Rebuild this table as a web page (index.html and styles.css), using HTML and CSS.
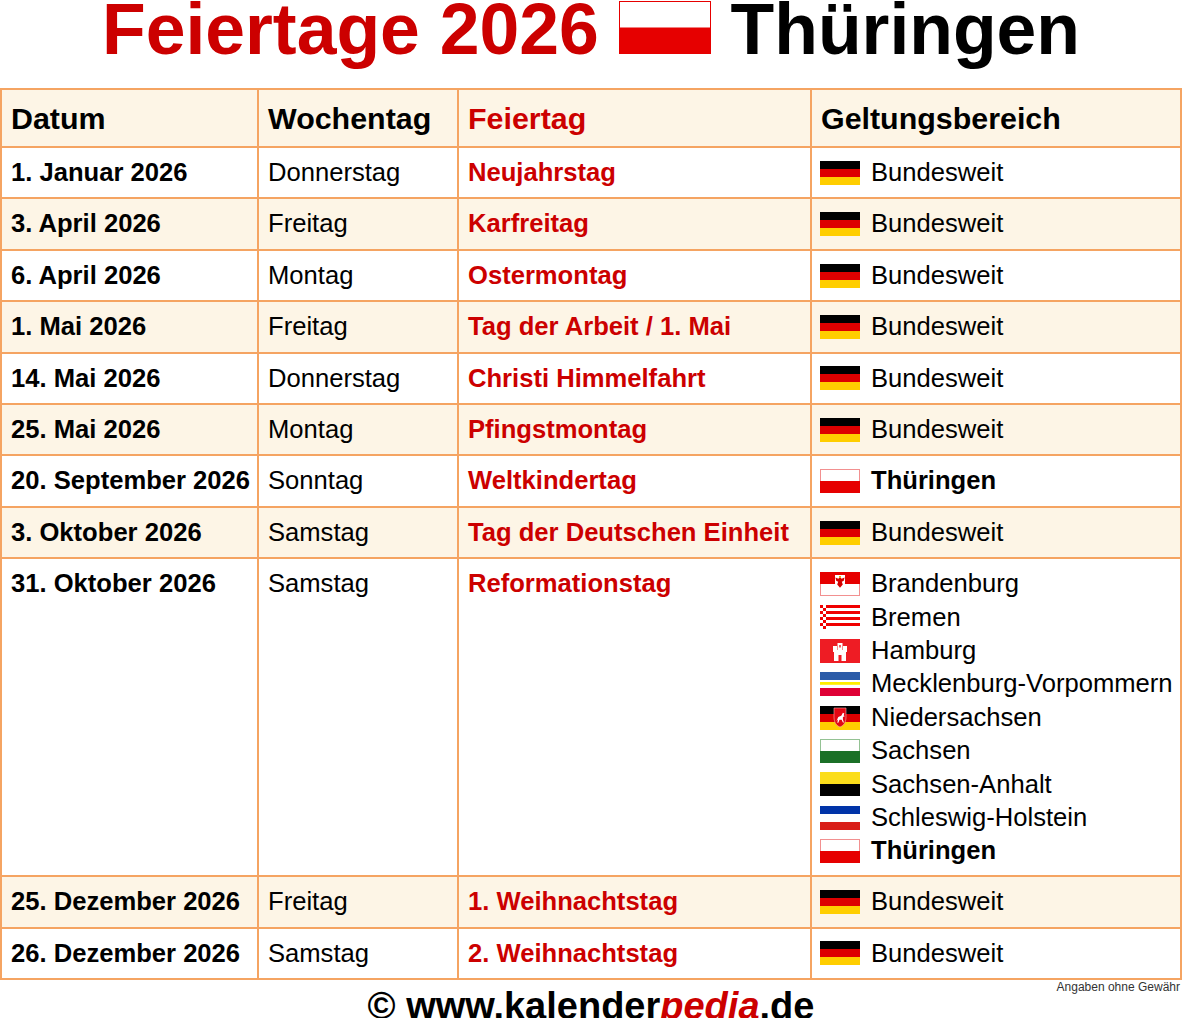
FILE: index.html
```html
<!DOCTYPE html>
<html lang="de">
<head>
<meta charset="utf-8">
<title>Feiertage 2026 Thüringen</title>
<link rel="stylesheet" href="styles.css">
</head>
<body>
<svg class="defs" width="0" height="0" aria-hidden="true">
  <defs>
    <symbol id="f-de" viewBox="0 0 40 24">
      <rect width="40" height="8" fill="#000"/>
      <rect y="8" width="40" height="8" fill="#dd0000"/>
      <rect y="16" width="40" height="8" fill="#ffce00"/>
    </symbol>
    <symbol id="f-th" viewBox="0 0 40 24">
      <rect x="0.5" y="0.5" width="39" height="23" fill="#fff" stroke="#f29090"/>
      <rect y="12" width="40" height="12" fill="#e60000"/>
    </symbol>
    <symbol id="f-bb" viewBox="0 0 40 24">
      <rect x="0.5" y="0.5" width="39" height="23" fill="#fff" stroke="#f29090"/>
      <rect width="40" height="12" fill="#e60000"/>
      <path d="M15 3h10v8c0 4-2.5 6-5 7c-2.5-1-5-3-5-7z" fill="#fff"/>
      <path d="M20 5l1.6 1.8l3-1.2l-0.8 3.2l-2 1l1 2.8l-2.8 3.2l-2.8-3.2l1-2.8l-2-1l-0.8-3.2l3 1.2z" fill="#d40000"/>
      <rect x="19" y="4" width="2" height="1.5" fill="#e8b800"/>
    </symbol>
    <symbol id="f-hb" viewBox="0 0 40 24">
      <rect width="40" height="24" fill="#fff"/>
      <rect y="0" width="40" height="3" fill="#f00000"/>
      <rect y="6" width="40" height="3" fill="#f00000"/>
      <rect y="12" width="40" height="3" fill="#f00000"/>
      <rect y="18" width="40" height="3" fill="#f00000"/>
      <rect x="3" y="0" width="3" height="3" fill="#fff"/>
      <rect x="3" y="3" width="3" height="3" fill="#f00000"/>
      <rect x="3" y="6" width="3" height="3" fill="#fff"/>
      <rect x="3" y="9" width="3" height="3" fill="#f00000"/>
      <rect x="3" y="12" width="3" height="3" fill="#fff"/>
      <rect x="3" y="15" width="3" height="3" fill="#f00000"/>
      <rect x="3" y="18" width="3" height="3" fill="#fff"/>
      <rect x="3" y="21" width="3" height="3" fill="#f00000"/>
    </symbol>
    <symbol id="f-hh" viewBox="0 0 40 24">
      <rect width="40" height="24" fill="#ee1c24"/>
      <rect x="14" y="11" width="12" height="11" fill="#fff"/>
      <rect x="17.5" y="4" width="5" height="8" fill="#fff"/>
      <rect x="13" y="7" width="4" height="6" fill="#fff"/>
      <rect x="23" y="7" width="4" height="6" fill="#fff"/>
      <rect x="18.5" y="16" width="3" height="6" fill="#ee1c24"/>
      <rect x="19.3" y="6" width="1.4" height="2.5" fill="#ee1c24"/>
    </symbol>
    <symbol id="f-mv" viewBox="0 0 40 24">
      <rect width="40" height="24" fill="#fff"/>
      <rect width="40" height="8" fill="#2b5ca8"/>
      <rect y="10" width="40" height="2.8" fill="#ffee00"/>
      <rect y="16" width="40" height="8" fill="#df0035"/>
    </symbol>
    <symbol id="f-ni" viewBox="0 0 40 24">
      <rect width="40" height="8" fill="#000"/>
      <rect y="8" width="40" height="8" fill="#dd0000"/>
      <rect y="16" width="40" height="8" fill="#ffce00"/>
      <path d="M14 2h12v9c0 6-3 9-6 10c-3-1-6-4-6-10z" fill="#e20613" stroke="#f4b0b0" stroke-width="0.6"/>
      <path d="M16.5 15l1.8-4l3-1.2l1.6-3l1.4 0.6l-0.6 1.8l1 1l-1.8 0.8l0 2.6l1 3l-1 0l-1.2-2.8l-2.2 0l-1.2 3l-1 0l0.8-3.4z" fill="#fff"/>
    </symbol>
    <symbol id="f-sn" viewBox="0 0 40 24">
      <rect x="0.5" y="0.5" width="39" height="23" fill="#fff" stroke="#94c294"/>
      <rect y="12" width="40" height="12" fill="#1b7027"/>
    </symbol>
    <symbol id="f-st" viewBox="0 0 40 24">
      <rect width="40" height="12" fill="#fbdd1b"/>
      <rect y="12" width="40" height="12" fill="#000"/>
    </symbol>
    <symbol id="f-sh" viewBox="0 0 40 24">
      <rect width="40" height="24" fill="#fff"/>
      <rect width="40" height="8" fill="#0033a8"/>
      <rect y="16" width="40" height="8" fill="#d91e18"/>
    </symbol>
  </defs>
</svg>

<h1 class="title"><span class="title-red">Feiertage 2026</span> <svg class="title-flag" viewBox="0 0 92 53" width="92" height="53"><rect x="0.5" y="0.5" width="91" height="52" fill="#fff" stroke="#e60000"/><rect y="26.5" width="92" height="26.5" fill="#e60000"/></svg> Thüringen</h1>

<table class="holidays">
  <thead>
    <tr>
      <th class="c1">Datum</th>
      <th class="c2">Wochentag</th>
      <th class="c3 red">Feiertag</th>
      <th class="c4">Geltungsbereich</th>
    </tr>
  </thead>
  <tbody>
    <tr>
      <td class="date">1. Januar 2026</td><td>Donnerstag</td><td class="name">Neujahrstag</td>
      <td class="area"><div class="region"><svg class="flag"><use href="#f-de"/></svg><span>Bundesweit</span></div></td>
    </tr>
    <tr class="alt">
      <td class="date">3. April 2026</td><td>Freitag</td><td class="name">Karfreitag</td>
      <td class="area"><div class="region"><svg class="flag"><use href="#f-de"/></svg><span>Bundesweit</span></div></td>
    </tr>
    <tr>
      <td class="date">6. April 2026</td><td>Montag</td><td class="name">Ostermontag</td>
      <td class="area"><div class="region"><svg class="flag"><use href="#f-de"/></svg><span>Bundesweit</span></div></td>
    </tr>
    <tr class="alt">
      <td class="date">1. Mai 2026</td><td>Freitag</td><td class="name">Tag der Arbeit / 1. Mai</td>
      <td class="area"><div class="region"><svg class="flag"><use href="#f-de"/></svg><span>Bundesweit</span></div></td>
    </tr>
    <tr>
      <td class="date">14. Mai 2026</td><td>Donnerstag</td><td class="name">Christi Himmelfahrt</td>
      <td class="area"><div class="region"><svg class="flag"><use href="#f-de"/></svg><span>Bundesweit</span></div></td>
    </tr>
    <tr class="alt">
      <td class="date">25. Mai 2026</td><td>Montag</td><td class="name">Pfingstmontag</td>
      <td class="area"><div class="region"><svg class="flag"><use href="#f-de"/></svg><span>Bundesweit</span></div></td>
    </tr>
    <tr>
      <td class="date">20. September 2026</td><td>Sonntag</td><td class="name">Weltkindertag</td>
      <td class="area"><div class="region"><svg class="flag"><use href="#f-th"/></svg><strong>Thüringen</strong></div></td>
    </tr>
    <tr class="alt">
      <td class="date">3. Oktober 2026</td><td>Samstag</td><td class="name">Tag der Deutschen Einheit</td>
      <td class="area"><div class="region"><svg class="flag"><use href="#f-de"/></svg><span>Bundesweit</span></div></td>
    </tr>
    <tr class="tall">
      <td class="date">31. Oktober 2026</td><td>Samstag</td><td class="name">Reformationstag</td>
      <td class="area list">
        <div class="region item"><svg class="flag"><use href="#f-bb"/></svg><span>Brandenburg</span></div>
        <div class="region item"><svg class="flag"><use href="#f-hb"/></svg><span>Bremen</span></div>
        <div class="region item"><svg class="flag"><use href="#f-hh"/></svg><span>Hamburg</span></div>
        <div class="region item"><svg class="flag"><use href="#f-mv"/></svg><span>Mecklenburg-Vorpommern</span></div>
        <div class="region item"><svg class="flag"><use href="#f-ni"/></svg><span>Niedersachsen</span></div>
        <div class="region item"><svg class="flag"><use href="#f-sn"/></svg><span>Sachsen</span></div>
        <div class="region item"><svg class="flag"><use href="#f-st"/></svg><span>Sachsen-Anhalt</span></div>
        <div class="region item"><svg class="flag"><use href="#f-sh"/></svg><span>Schleswig-Holstein</span></div>
        <div class="region item"><svg class="flag"><use href="#f-th"/></svg><strong>Thüringen</strong></div>
      </td>
    </tr>
    <tr class="alt">
      <td class="date">25. Dezember 2026</td><td>Freitag</td><td class="name">1. Weihnachtstag</td>
      <td class="area"><div class="region"><svg class="flag"><use href="#f-de"/></svg><span>Bundesweit</span></div></td>
    </tr>
    <tr>
      <td class="date">26. Dezember 2026</td><td>Samstag</td><td class="name">2. Weihnachtstag</td>
      <td class="area"><div class="region"><svg class="flag"><use href="#f-de"/></svg><span>Bundesweit</span></div></td>
    </tr>
  </tbody>
</table>

<div class="note">Angaben ohne Gewähr</div>
<div class="copyright">© www.kalender<em class="pedia">pedia</em>.de</div>
</body>
</html>
```

FILE: styles.css
```css
html, body {
  margin: 0;
  padding: 0;
  background: #fff;
}

body {
  font-family: "Liberation Sans", Arial, sans-serif;
  color: #000;
  width: 1182px;
}

.defs {
  position: absolute;
  width: 0;
  height: 0;
  overflow: hidden;
}

.title {
  margin: 0 0 29px;
  font-size: 71.5px;
  line-height: 59px;
  font-weight: bold;
  text-align: center;
  white-space: nowrap;
}

.title-red {
  color: #cc0000;
}

.title-flag {
  display: inline-block;
  vertical-align: baseline;
}

.holidays {
  width: 1182px;
  table-layout: fixed;
  border-collapse: separate;
  border-spacing: 0;
  border-left: 2px solid #f5a462;
  border-top: 2px solid #f5a462;
}

.holidays th,
.holidays td {
  box-sizing: border-box;
  border-right: 2px solid #f5a462;
  border-bottom: 2px solid #f5a462;
  text-align: left;
  vertical-align: top;
  padding: 10px 8px 10px 9px;
  font-size: 25.6px;
  line-height: 29.4px;
  white-space: nowrap;
}

.holidays th {
  background: #fdf5e6;
  font-size: 30.4px;
  line-height: 30px;
  padding-top: 13px;
  padding-bottom: 13px;
  font-weight: bold;
}

.holidays td.area {
  padding-left: 8px;
}

.c1 { width: 257px; }
.c2 { width: 200px; }
.c3 { width: 353px; }
.c4 { width: 370px; }

.red {
  color: #cc0000;
}

.alt td {
  background: #fdf5e6;
}

.date {
  font-weight: bold;
}

.name {
  font-weight: bold;
  color: #cc0000;
}

.region {
  display: flex;
  align-items: center;
  gap: 11px;
  height: 29.4px;
}

.region strong {
  font-weight: bold;
}

.flag {
  width: 40px;
  height: 24px;
  flex: none;
}

.holidays td.list {
  padding-top: 8px;
  padding-bottom: 7.5px;
}

.item {
  height: 33.4px;
}

.note {
  margin-top: 0;
  text-align: right;
  font-size: 12px;
  line-height: 14px;
  padding-right: 2px;
  color: #333;
}

.copyright {
  text-align: center;
  font-size: 38px;
  line-height: 24px;
  font-weight: bold;
}

.pedia {
  color: #cc0000;
  font-style: italic;
}
```
